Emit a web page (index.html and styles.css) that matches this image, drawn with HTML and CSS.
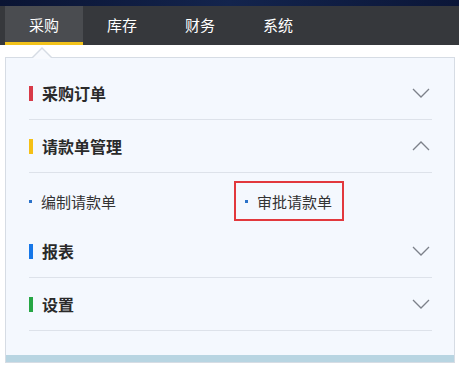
FILE: index.html
```html
<!DOCTYPE html>
<html lang="zh-CN">
<head>
    <meta charset="UTF-8">
    <meta name="viewport" content="width=device-width, initial-scale=1.0">
    <title>采购菜单</title>
    <link rel="stylesheet" href="styles.css">
</head>
<body>
    <div class="top-strip"></div>
    <nav class="main-nav">
        <a class="nav-tab active">采购</a>
        <a class="nav-tab">库存</a>
        <a class="nav-tab">财务</a>
        <a class="nav-tab">系统</a>
    </nav>

    <div class="dropdown">
        <div class="group">
            <div class="group-head">
                <span class="mark red"></span>
                <span class="group-title">采购订单</span>
                <svg class="chevron" width="18" height="10" viewBox="0 0 18 10"><path d="M1 1 L9 9 L17 1" /></svg>
            </div>
        </div>

        <div class="group open">
            <div class="group-head">
                <span class="mark yellow"></span>
                <span class="group-title">请款单管理</span>
                <svg class="chevron" width="18" height="10" viewBox="0 0 18 10"><path d="M1 9 L9 1 L17 9" /></svg>
            </div>
            <div class="sub-list">
                <div class="sub-item"><span class="dot"></span>编制请款单</div>
                <div class="sub-item marked"><span class="dot"></span>审批请款单</div>
            </div>
        </div>

        <div class="group">
            <div class="group-head">
                <span class="mark blue"></span>
                <span class="group-title">报表</span>
                <svg class="chevron" width="18" height="10" viewBox="0 0 18 10"><path d="M1 1 L9 9 L17 1" /></svg>
            </div>
        </div>

        <div class="group">
            <div class="group-head">
                <span class="mark green"></span>
                <span class="group-title">设置</span>
                <svg class="chevron" width="18" height="10" viewBox="0 0 18 10"><path d="M1 1 L9 9 L17 1" /></svg>
            </div>
        </div>

        <div class="dropdown-foot"></div>
    </div>
</body>
</html>
```

FILE: styles.css
```css
body {
    margin: 0;
    padding: 0;
    background: #fff;
    font-family: "Noto Sans CJK SC", "Noto Sans", sans-serif;
    color: #222;
}

.top-strip {
    height: 6px;
    background: linear-gradient(90deg, #0a1433 0%, #13244d 50%, #0b1638 100%);
}

/* Top navigation */
.main-nav {
    display: flex;
    height: 39px;
    padding-left: 5px;
    background: #36383c;
}

.nav-tab {
    width: 78px;
    box-sizing: border-box;
    text-align: center;
    line-height: 38px;
    font-size: 15px;
    color: #fff;
    cursor: pointer;
}

.nav-tab.active {
    background: #4a4c50;
    border-bottom: 3px solid #f2c21a;
}

/* Dropdown panel */
.dropdown {
    position: relative;
    margin: 12px 4px 0 5px;
    padding: 9px 22px 0 23px;
    background: #f4f8fe;
    border: 1px solid #d6dce4;
}

.dropdown::before,
.dropdown::after {
    content: "";
    position: absolute;
    left: 25px;
    top: -11px;
    border-left: 11px solid transparent;
    border-right: 11px solid transparent;
    border-bottom: 11px solid #d6dce4;
}

.dropdown::after {
    left: 26px;
    top: -9px;
    border-left-width: 10px;
    border-right-width: 10px;
    border-bottom: 10px solid #f8fafe;
}

.group {
    border-bottom: 1px solid #dde2ea;
}

.group-head {
    display: flex;
    align-items: center;
    height: 52px;
    padding-right: 2px;
}

.mark {
    width: 4px;
    height: 15px;
    margin-right: 9px;
}

.mark.red { background: #d83a48; }
.mark.yellow { background: #f5c016; }
.mark.blue { background: #1677e8; }
.mark.green { background: #26a644; }

.group-title {
    flex: 1;
    font-size: 16px;
    font-weight: bold;
    color: #2a2a2a;
}

.chevron {
    fill: none;
    stroke: #7c818a;
    stroke-width: 1.3;
}

/* Sub menu */
.group.open {
    border-bottom: none;
}

.group.open .group-head {
    border-bottom: 1px solid #dde2ea;
}

.sub-list {
    display: grid;
    grid-template-columns: 205px 1fr;
    align-items: center;
    padding: 8px 0 4px;
}

.sub-item {
    display: flex;
    align-items: center;
    height: 40px;
    font-size: 15px;
    color: #333;
}

.sub-item .dot {
    width: 3px;
    height: 3px;
    margin-right: 9px;
    background: #2b72c9;
}

.sub-item.marked {
    justify-self: start;
    box-sizing: border-box;
    padding: 0 10px 0 9px;
    border: 2px solid #e2383d;
}

.dropdown-foot {
    height: 7px;
    margin: 24px -22px 0 -23px;
    background: #b8d5e2;
}
```
